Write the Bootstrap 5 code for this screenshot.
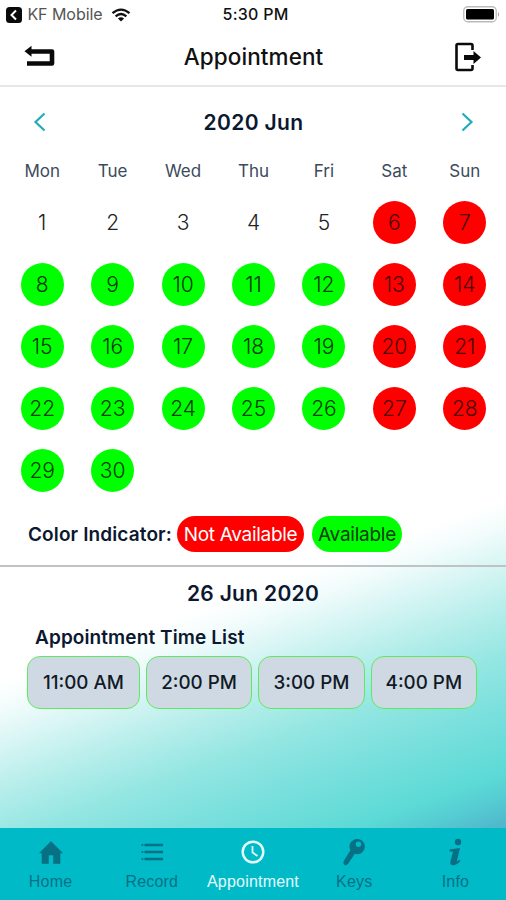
<!DOCTYPE html>
<html lang="en">
<head>
<meta charset="utf-8">
<meta name="viewport" content="width=device-width, initial-scale=1">
<title>Appointment</title>
<link href="https://cdn.jsdelivr.net/npm/bootstrap@5.3.0/dist/css/bootstrap.min.css" rel="stylesheet">
<style>
body{font-family:Inter,"Liberation Sans",sans-serif;color:#0b1830;line-height:1.2;background:#fff}
svg{display:block;flex:none}
.app-shell{height:900px;overflow:hidden}
.status-row{height:28px;color:#111;padding:1px 6px 0 6px}
.side-cell{flex:1 1 0}
.kf-label{color:#555;font-size:16px;letter-spacing:-.05px}
.clock-label{font-size:16px;font-weight:500;letter-spacing:.25px;padding-left:5px}
.title-row{height:59px;border-bottom:2px solid #e6e6e6;padding:0 24px}
.title-text{font-size:22.5px;font-weight:500;color:#111;letter-spacing:.1px;margin-right:3px}
.main-area{background:linear-gradient(160deg,#fff 67.5%,#f3fcfc 70%,#b7eeeb 78%,#94e6e2 83%,#7be0dd 88%,#5cdad6 94.5%,#55cbd2 97%,#4fb5cb 100%);background-size:100% 828px;background-position:0 -87px;background-repeat:no-repeat;height:741px}
.month-row{height:70px;padding:0 31px 0 32px}
.month-text{font-size:21px;font-weight:600;letter-spacing:.35px;padding-top:1px}
.cal-grid{display:grid;grid-template-columns:repeat(7,1fr);padding:0 6px 0 7px}
.week-cell{height:34px;font-size:17px;color:#3b4b5c;letter-spacing:0;padding-bottom:5px}
.day-cell{height:62.1px}
.dot{width:43px;height:43px;font-size:21px;font-weight:300;color:#222;padding-top:1px}
.dot-free{background:#0f0;color:#043a04}
.dot-busy{background:#f00;color:#4a0505}
.legend-row{height:66px;padding:2px 0 0 28px;border-bottom:2px solid #bfc3c4}
.legend-title{font-size:19px;font-weight:600;width:149px;white-space:nowrap;letter-spacing:.12px;padding-top:1px}
.pill{height:36px;font-size:19px;white-space:nowrap;letter-spacing:-.25px;padding-top:1px}
.pill-busy{background:#f00;color:#fff;width:127px;margin-right:8px;letter-spacing:-.3px}
.pill-free{background:#0f0;color:#063c0b;width:90px}
.date-text{font-size:21px;font-weight:600;height:53px;letter-spacing:.3px}
.list-title{font-size:19px;font-weight:600;height:36px;padding-left:35px;letter-spacing:.1px}
.slots{padding:0 29px 0 27px;gap:6px}
.slot{height:53px;width:106.5px;border:1.5px solid #5deb5d;border-radius:13px;background:#cfd9e4;color:#111a26;font-size:18.8px;font-weight:500;white-space:nowrap}
.slot-wide{width:113px}
.tab-row{height:72px;background:#00bac8;color:#087085;font-family:"Liberation Sans",sans-serif;font-size:16px;letter-spacing:.2px}
.tab-cell{flex:1 1 0;min-width:0;padding-top:9px;color:inherit;text-decoration:none}
.tab-cell svg{height:30px;margin-bottom:5px}
.tab-on{color:#e4fafc}
</style>
<script src="https://cdn.jsdelivr.net/npm/bootstrap@5.3.0/dist/js/bootstrap.bundle.min.js"></script>
</head>
<body>
<div class="app-shell d-flex flex-column">
  <div class="status-row d-flex align-items-center">
    <div class="side-cell d-flex align-items-center">
      <svg width="16" height="16" viewBox="0 0 16 16"><rect width="16" height="16" rx="3.500" fill="#0a0a0a"/><path d="M10 3.500 5.500 8l4.500 4.500" fill="none" stroke="#fff" stroke-width="2"/></svg>
      <span class="kf-label ms-1 text-nowrap ps-0">&hairsp;KF Mobile</span>
      <svg class="ms-2" width="20" height="14" viewBox="0 0 20 14" fill="none" stroke="#111" stroke-width="2.300"><path d="M1.500 5.200Q10-2 18.500 5.200M4.600 8.300Q10 3.700 15.400 8.300"/><path d="M10 13.500 6.900 10.400Q10 8 13.100 10.400Z" fill="#111" stroke="none"/></svg>
    </div>
    <span class="clock-label">5:30 PM</span>
    <div class="side-cell d-flex justify-content-end">
      <svg width="37" height="17" viewBox="0 0 37 17"><rect x=".75" y=".75" width="32.500" height="15" rx="4" fill="#fff" stroke="#bbb" stroke-width="1.300"/><rect x="3" y="3" width="28" height="10.500" rx="1.500"/><path d="M35 6v5q2-2.500 0-5" fill="#999"/></svg>
    </div>
  </div>
  <header class="title-row d-flex align-items-center justify-content-between">
    <svg width="32" height="24" viewBox="0 0 32 24"><path d="M7 6.500H28V18.500H3" fill="none" stroke="#0a0a0a" stroke-width="4.600" stroke-linejoin="round"/><path d="M.5 6.300 7.500.8v11Z" fill="#0a0a0a"/></svg>
    <span class="title-text">Appointment</span>
    <svg width="28" height="30" viewBox="0 0 28 30"><path d="M18.500 8V3.500Q18.500 2 17 2H4Q2.500 2 2.500 3.500V26.500Q2.500 28 4 28H17Q18.500 28 18.500 26.500V23" fill="none" stroke="#0a0a0a" stroke-width="2.600"/><path d="M10 13h9.500V9l7.500 6.500-7.500 6.500v-4H10Z" fill="#0a0a0a"/></svg>
  </header>
  <main class="main-area">
    <div class="month-row d-flex align-items-center justify-content-between">
      <svg width="16" height="20" viewBox="0 0 16 20"><path d="M12.500 1.500 3.500 10l9 8.500" fill="none" stroke="#21adb8" stroke-width="2.200"/></svg>
      <span class="month-text">2020 Jun</span>
      <svg width="16" height="20" viewBox="0 0 16 20"><path d="m3.500 1.500 9 8.500-9 8.500" fill="none" stroke="#21adb8" stroke-width="2.200"/></svg>
    </div>
    <div class="cal-grid" id="calendar"></div>
    <div class="legend-row d-flex align-items-center">
      <span class="legend-title">Color Indicator:</span>
      <span class="pill pill-busy rounded-pill d-flex align-items-center justify-content-center">Not Available</span>
      <span class="pill pill-free rounded-pill d-flex align-items-center justify-content-center">Available</span>
    </div>
    <div class="date-text d-flex align-items-center justify-content-center">26 Jun 2020</div>
    <div class="list-title d-flex align-items-center">Appointment Time List</div>
    <div class="slots d-flex">
      <div class="slot slot-wide d-flex align-items-center justify-content-center">11:00 AM</div>
      <div class="slot d-flex align-items-center justify-content-center">2:00 PM</div>
      <div class="slot d-flex align-items-center justify-content-center">3:00 PM</div>
      <div class="slot d-flex align-items-center justify-content-center">4:00 PM</div>
    </div>
  </main>
  <nav class="tab-row d-flex text-center">
    <a class="tab-cell d-flex flex-column align-items-center" href="#"><svg width="28" height="30" viewBox="0 0 28 30"><path d="M14 4.500 2.500 16H5V26.500H11.500V18H16.500V26.500H23V16H25.500Z" fill="currentColor" stroke="currentColor" stroke-width=".6" stroke-linejoin="round"/></svg>Home</a>
    <a class="tab-cell d-flex flex-column align-items-center" href="#"><svg width="28" height="30" viewBox="0 0 28 30"><path d="M6.500 8H25M6.500 15H25M6.500 22H25" stroke="currentColor" stroke-width="2.600"/><path d="M3.500 8h1.800M3.500 15h1.800M3.500 22h1.800" stroke="currentColor" stroke-width="1.800"/></svg>Record</a>
    <a class="tab-cell tab-on d-flex flex-column align-items-center" href="#"><svg width="28" height="30" viewBox="0 0 28 30" fill="none" stroke="currentColor"><circle cx="14" cy="15" r="10.300" stroke-width="2.400"/><path d="M13.500 9v6.500l5 3.500" stroke-width="1.800"/></svg>Appointment</a>
    <a class="tab-cell d-flex flex-column align-items-center" href="#"><svg width="28" height="30" viewBox="0 0 28 30"><path fill-rule="evenodd" d="M17.300 2a7.600 7.600 0 0 1 0 15.200q-1.500 0-2.500-.4L8.300 26.500Q6.500 29 4.500 28 2.500 26.500 3.700 24L10.400 13.200A7.600 7.600 0 0 1 17.300 2ZM18.500 4.600a2.700 2.700 0 1 0 0 5.400 2.700 2.700 0 0 0 0-5.400Z" fill="currentColor"/></svg>Keys</a>
    <a class="tab-cell d-flex flex-column align-items-center" href="#"><svg width="28" height="30" viewBox="0 0 28 30" fill="currentColor"><circle cx="17" cy="5" r="3.200"/><path d="M8.500 12.500 19 11 16 23.500Q15.800 25 18.800 22.500L19.300 24Q15.500 28.500 11.500 28.300 8.500 27.500 9.500 24L12 14.700 8.500 14.500Z"/></svg>Info</a>
  </nav>
</div>
<script>
const grid = document.getElementById('calendar');
['Mon','Tue','Wed','Thu','Fri','Sat','Sun'].forEach(name => {
  grid.insertAdjacentHTML('beforeend', `<div class="week-cell d-flex align-items-center justify-content-center">${name}</div>`);
});
for (let d = 1; d <= 30; d++) {
  const state = (d - 1) % 7 > 4 ? 'dot-busy' : d > 7 ? 'dot-free' : '';
  grid.insertAdjacentHTML('beforeend', `<div class="day-cell d-flex align-items-center justify-content-center"><span class="dot ${state} rounded-circle d-flex align-items-center justify-content-center">${d}</span></div>`);
}
</script>
</body>
</html>
